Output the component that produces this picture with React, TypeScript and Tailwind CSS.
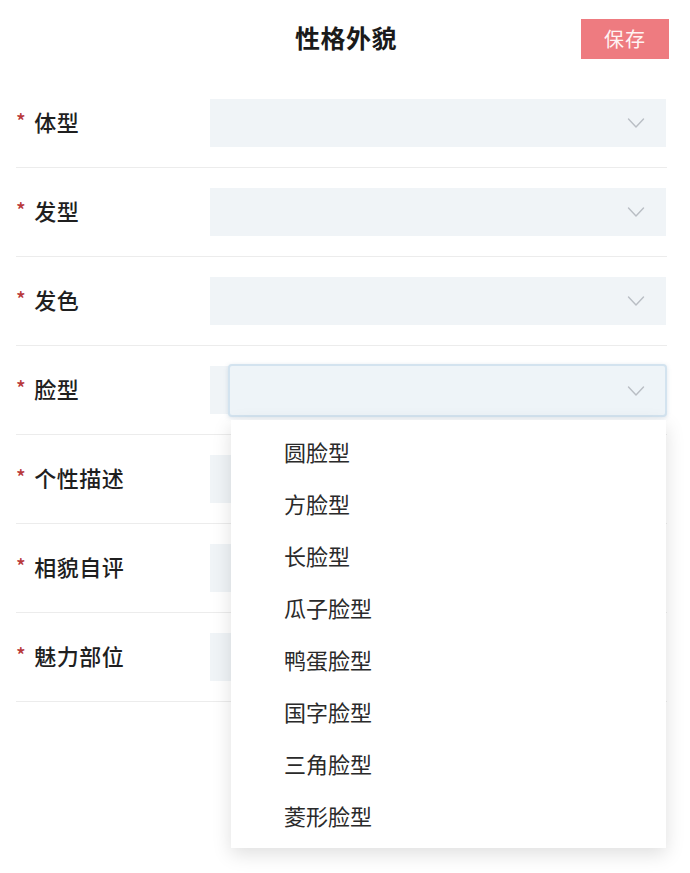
import React from "react";

const font = { fontFamily: '"Noto Sans CJK SC", "Noto Sans", sans-serif' };

const fields = ["体型", "发型", "发色", "脸型", "个性描述", "相貌自评", "魅力部位"];
const faceShapes = ["圆脸型", "方脸型", "长脸型", "瓜子脸型", "鸭蛋脸型", "国字脸型", "三角脸型", "菱形脸型"];

const Chevron = () => (
    <svg width="18" height="12" viewBox="0 0 18 12" fill="none" className="shrink-0">
        <path d="M1.5 2L9 10L16.5 2" stroke="#b9bec4" strokeWidth="1.4" strokeLinecap="round" strokeLinejoin="round" />
    </svg>
);

const App = () => {
    return (
        <div className="relative w-[690px] h-[873px] bg-white text-[#1f1f1f]" style={font}>
            {/* header */}
            <div className="grid grid-cols-[1fr_auto_1fr] items-center h-[79px] pb-[2px]">
                <div />
                <h1 className="text-[25px] font-bold tracking-[0.5px] text-[#1a1a1a] pl-[2px] -mt-[2px]">性格外貌</h1>
                <div className="flex justify-end pr-[21px]">
                    <button className="w-[88px] h-[40px] bg-[#ee7b80] text-[#fff3f3] text-[20px] tracking-[1px]">保存</button>
                </div>
            </div>

            {/* form rows */}
            <div className="flex flex-col ml-[16px] w-[651px]">
                {fields.map((name, i) => (
                    <div key={name} className="flex items-center h-[89px] border-b border-[#ececec]">
                        <div className="flex items-center w-[194px] text-[22px] font-medium tracking-[0.5px] -mt-[3px]">
                            <span className="text-[#b8383b] text-[20px] mr-[8px] -mt-[2px]">*</span>
                            <span>{name}</span>
                        </div>
                        <div className="relative flex-1 h-[48px] mr-[1px] flex items-center justify-end pr-[21px] bg-[#f0f4f7]">
                            {i < 4 && i !== 3 && <Chevron />}
                            {i === 3 && (
                                <>
                                    <div className="absolute left-[18px] -right-[1px] -top-[2px] -bottom-[3px] flex items-center justify-end pr-[20px] rounded-[4px] border-2 border-[#d3e3ef] bg-[#eef4f8] shadow-[0_1px_4px_rgba(120,150,180,0.25)]">
                                        <Chevron />
                                    </div>
                                    <div className="absolute left-[21px] top-[54px] w-[435px] z-10 bg-white pt-[5px] pb-[7px] shadow-[0_6px_18px_rgba(0,0,0,0.13)]">
                                        {faceShapes.map((s) => (
                                            <div key={s} className="h-[52px] flex items-center pl-[53px] text-[22px] text-[#2a2a2a]">
                                                {s}
                                            </div>
                                        ))}
                                    </div>
                                </>
                            )}
                        </div>
                    </div>
                ))}
            </div>
        </div>
    );
};

export default App;
